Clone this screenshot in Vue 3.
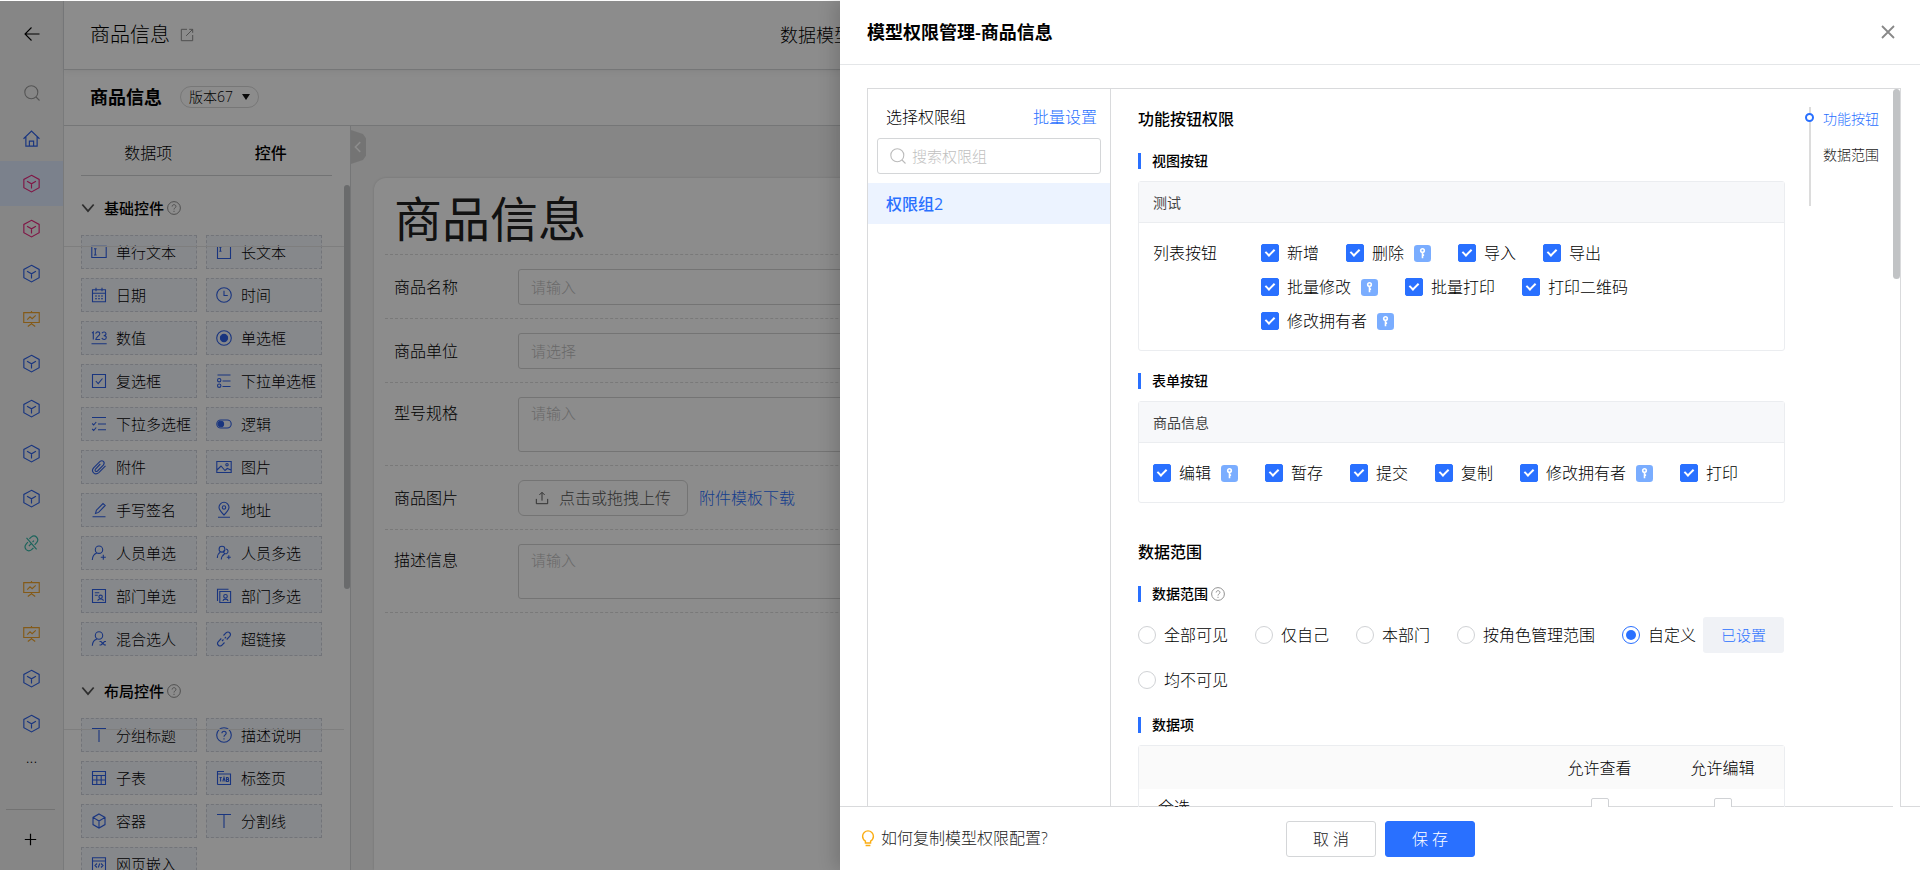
<script setup>
import { ref } from 'vue'

const icons = {
  back: '<path d="M15.500 8H1M7.500 1.500 1 8l6.500 6.500"/>',
  search: '<circle cx="7.300" cy="7.300" r="6.500"/><path d="M12 12l3.500 3.500"/>',
  home: '<path d="M.5 8.200 8 1l7.500 7.200M2.700 6.500v8.700h10.600V6.500M6 15v-4.500h4V15"/>',
  cube: '<path d="M8 .3 15.200 4.200v7.800L8 15.900.8 12V4.200zM3.800 5.900 8 8.300l4.200-2.400M8 8.300v4.500"/>',
  board: '<path d="M.7 2.500h14.600v9.300H.7zM8 1v1.500M8 12v1.500M4.500 15.500 8 13l3.500 2.500M4 9l2.600-2.500 2 1.700L12 5"/>',
  unlink: '<path d="M6 3.500 8 1.800c1.400-1.100 3.500-1 4.800.3 1.300 1.400 1.300 3.500.2 4.900l-2 2.200M4.600 6.600 2.800 8.900C1.700 10.300 1.800 12.400 3 13.700c1.400 1.300 3.400 1.400 4.800.3l2-1.800M3.300 2.800l9.500 10.700M5.500 10.500l2-2.200M9 6.800l1.200-1.400"/>',
  open: '<path d="M8 1.500H1.500v13h13V8M10.500 1.500h4v4M14.500 1.500 7 9"/>',
  help: '<circle cx="8" cy="8" r="7.300"/><path d="M5.900 6.300c0-2.800 4.300-2.800 4.300 0 0 1.600-2.200 1.500-2.200 3.400M8 11.200v1.300"/>',
  chevron: '<path d="M1.500 4 8 11.500 14.500 4"/>',
  input: '<path d="M.8 2.200h14.400v11.300H.8zM3 4.700h2.600M3 11h2.600M4.300 4.700V11"/>',
  longtext: '<path d="M1.500 2v12.500h13V2M3.300 3.300h2.200M3.300 7.300h2.200M4.400 3.300v4"/>',
  date: '<path d="M1.500 2.800h13v12h-13zM1.500 6.200h13M5 .8v3.500M11 .8v3.500M4 9h2M7 9h2M10 9h2M4 11.800h2M7 11.800h2M10 11.800h2"/>',
  time: '<circle cx="8" cy="8" r="7.300"/><path d="M8 3.800V8.500h3.800"/>',
  number: '<path d="M1 3.200 2.300 2v7.500M4.800 3.700c0-2.500 4-2.300 4 0 0 2-4 3.500-4 5.800h4.300M11 3.200c.8-1.800 4-1.500 4 .5 0 1.300-1 1.900-2.300 1.900 1.500 0 2.600.6 2.600 2 0 2.400-3.600 2.500-4.500.5M.5 13.700h15.200"/>',
  radio: '<circle cx="8" cy="8" r="7.300"/><circle cx="8" cy="8" r="3.600" fill="currentColor"/>',
  check: '<path d="M1.500 1.500h13v13h-13zM4.800 8l2.400 2.600L11.500 5.500"/>',
  selone: '<circle cx="3.200" cy="7.200" r="1.700"/><circle cx="3.200" cy="12.700" r="1.700"/><path d="M1.500 2h13M6.500 8h8M6.500 13.500h8"/>',
  selmany: '<path d="M1 1.500h14M7 8h8M7 13.800h8M1.200 7.500 2.700 9l2.500-3M1.200 13 2.700 14.500l2.500-3"/>',
  toggle: '<rect x=".8" y="4" width="14.400" height="8" rx="4"/><circle cx="4.800" cy="8" r="2.800" fill="currentColor"/>',
  clip: '<path d="M14.500 6.800l-6.700 6.800c-3.700 3.300-8.300-1-5.200-4.700l6.200-6.300c2.700-2.300 5.800.8 3.500 3.500L6.500 12c-1.600 1.300-3.300-.3-2-2l4.800-5"/>',
  image: '<path d="M.8 2.500h14.400v11H.8zM1 11l4-4 4 4.500 2.300-2 3.700 1.500"/><circle cx="11" cy="5.700" r="1.200"/>',
  sign: '<path d="M1.500 14.800h13M4.500 11.500l.9-3.300L12 1.500l2.200 2L7.600 10.400z"/>',
  place: '<path d="M8 13c-3.300-3.300-5-5.500-5-7.700a5 5 0 0 1 10 0C13 7.500 11.300 9.700 8 13zM2 15.300h12"/><circle cx="8" cy="5.500" r="1.700"/>',
  user: '<circle cx="8" cy="4.700" r="3.700"/><path d="M1.300 15c.2-4 2-6 4.500-6.900M12.300 9.800v5M9.800 12.300h5"/>',
  users: '<circle cx="6" cy="4.200" r="2.900"/><path d="M1.300 13c.2-3.500 1.500-5 3-5.900M10 4c2.300.3 2.800 3.200.8 4.500-2 .9-4-1-3-3M5.300 14.500c.2-2.800 1.500-4.500 3.200-5.500M12.800 10.300v4M10.800 12.300h4"/>',
  dept: '<path d="M1.500 1.500h13v13h-13zM3.800 4.800h4.500M3.800 7.300h3M6.800 12.800c.3-2.500 5.300-2.500 5.600 0"/><circle cx="9.600" cy="8.800" r="1.700"/>',
  depts: '<path d="M3.800 3.500h10.800v11H3.800zM1.500 13V1.300h11M7 13c.3-2.500 4.700-2.500 5 0"/><circle cx="9.500" cy="8.300" r="1.800"/>',
  mix: '<circle cx="8" cy="4.500" r="3.700"/><path d="M1.300 14.800c.2-4 2-6 4.500-6.700M8.500 10.500h1.500l3.500 3.500h1.500M8.500 14H10l3.500-3.500H15"/>',
  link: '<path d="M7.500 4.500l2.700-2.800c2.500-2 5.500 1 3.700 3.500l-3.200 3.300M8.500 11.500l-2.700 2.800c-2.500 2-5.500-1-3.700-3.500l3.200-3.300M6 10l1.500-1.500M8.700 7.300l1.300-1.300"/>',
  title: '<path d="M1 1.500h14M8 1.500v13.500"/>',
  table: '<path d="M1.500 1.500h13v13h-13zM1.500 5.500h13M1.500 10h13M5.800 5.500v9M10.200 5.500v9"/>',
  tab: '<path d="M1.500 14.500V1.500H8M1.500 4h13v10.500h-13M3.500 7.500h2.300M4.600 7.500v4M6.800 11.500l1.200-4 1.200 4M10.500 7.500v4h1.500c1 0 1-2 0-2h-1.500h1.300c1 0 .9-2 0-2z"/>',
  box: '<path d="M8 1 14 4.400v7.200L8 15l-6-3.400V4.400zM2 4.400 8 8l6-3.600M8 8v7"/>',
  web: '<path d="M1.500 1.800h13v12.700h-13zM1.500 5h13M6 7.500 4 9.500l2 2M10 7.500l2 2-2 2M8.700 7.500l-1.400 4"/>',
  upload: '<path d="M8 11V1.800M5 4.500l3-3 3 3M1.500 9v5.500h13V9"/>',
  left: '<path d="M11 1.500 4.500 8 11 14.500"/>',
  close: '<path d="M2 2l12 12M14 2 2 14"/>',
  plus: '<path d="M8 1v14M1 8h14"/>',
  bulb: '<path d="M5.400 13V11.200C3.700 10.100 2.600 8.300 2.600 6.300a5.400 5.400 0 0 1 10.800 0c0 2-1.100 3.800-2.800 4.900V13zM5.600 15.500h4.800"/>',
}

const nav = [
  ['home', 'blue', '首页'], ['cube', 'pink', '商品信息'], ['cube', 'pink', '模型'], ['cube', 'blue', '模型'],
  ['board', 'gold', '看板'], ['cube', 'blue', '模型'], ['cube', 'blue', '模型'], ['cube', 'blue', '模型'],
  ['cube', 'blue', '模型'], ['unlink', 'teal', '链接'], ['board', 'gold', '看板'], ['board', 'gold', '看板'],
  ['cube', 'blue', '模型'], ['cube', 'blue', '模型'],
]

const sections = [
  { name: '基础控件', items: [
    ['input', '单行文本'], ['longtext', '长文本'], ['date', '日期'], ['time', '时间'],
    ['number', '数值'], ['radio', '单选框'], ['check', '复选框'], ['selone', '下拉单选框'],
    ['selmany', '下拉多选框'], ['toggle', '逻辑'], ['clip', '附件'], ['image', '图片'],
    ['sign', '手写签名'], ['place', '地址'], ['user', '人员单选'], ['users', '人员多选'],
    ['dept', '部门单选'], ['depts', '部门多选'], ['mix', '混合选人'], ['link', '超链接'],
  ] },
  { name: '布局控件', items: [
    ['title', '分组标题'], ['help', '描述说明'], ['table', '子表'], ['tab', '标签页'],
    ['box', '容器'], ['title', '分割线'], ['web', '网页嵌入'],
  ] },
]

const listRows = ref([
  [{ t: '新增', on: true }, { t: '删除', on: true, key: true }, { t: '导入', on: true }, { t: '导出', on: true }],
  [{ t: '批量修改', on: true, key: true }, { t: '批量打印', on: true }, { t: '打印二维码', on: true }],
  [{ t: '修改拥有者', on: true, key: true }],
])
const formButtons = ref([
  { t: '编辑', on: true, key: true }, { t: '暂存', on: true }, { t: '提交', on: true },
  { t: '复制', on: true }, { t: '修改拥有者', on: true, key: true }, { t: '打印', on: true },
])
const scopes = ['全部可见', '仅自己', '本部门', '按角色管理范围', '自定义', '均不可见']
const scope = ref('自定义')
</script>

<template>
  <div class="app">
    <div class="workspace">
      <nav class="rail">
        <button class="rail-back" aria-label="返回"><svg class="ic" viewBox="0 0 16 16" v-html="icons.back" /></button>
        <button class="rail-search" aria-label="搜索"><svg class="ic" viewBox="0 0 16 16" v-html="icons.search" /></button>
        <a v-for="(n, i) in nav" :key="i" href="#" :class="['rail-item', n[1], { active: i === 1 }]" :aria-label="n[2]">
          <svg class="ic" viewBox="0 0 16 16" v-html="icons[n[0]]" />
        </a>
        <button class="rail-more">...</button>
        <div class="rail-foot"><button aria-label="新增"><svg class="ic plus" viewBox="0 0 16 16" v-html="icons.plus" /></button></div>
      </nav>

      <div class="main">
        <header class="topbar">
          <div class="topbar-name">商品信息<svg class="ic open" viewBox="0 0 16 16" v-html="icons.open" /></div>
          <a href="#" class="topbar-tab">数据模型</a>
        </header>
        <div class="subbar">
          <h1>商品信息</h1>
          <button class="version">版本67<i class="caret"></i></button>
        </div>

        <div class="designer">
          <aside class="palette">
            <div class="tabs">
              <button>数据项</button>
              <button class="current">控件</button>
            </div>
            <section v-for="s in sections" :key="s.name" class="group">
              <h2><svg class="ic chev" viewBox="0 0 16 16" v-html="icons.chevron" />{{ s.name }}<svg class="ic help" viewBox="0 0 16 16" v-html="icons.help" /></h2>
              <div class="group-grid">
                <button v-for="it in s.items" :key="it[1]" class="tool">
                  <svg class="ic" viewBox="0 0 16 16" v-html="icons[it[0]]" />{{ it[1] }}
                </button>
              </div>
            </section>
            <div class="thumb palette-thumb"></div>
          </aside>

          <div class="canvas">
            <button class="fold" aria-label="收起"><svg class="ic" viewBox="0 0 16 16" v-html="icons.left" /></button>
            <div class="sheet">
              <div class="sheet-title">商品信息</div>
              <div class="field"><label for="f1">商品名称</label><input id="f1" placeholder="请输入"></div>
              <div class="field"><label for="f2">商品单位</label><select id="f2"><option>请选择</option></select></div>
              <div class="field"><label for="f3">型号规格</label><textarea id="f3" placeholder="请输入"></textarea></div>
              <div class="field">
                <span class="label">商品图片</span>
                <button class="upload"><svg class="ic" viewBox="0 0 16 16" v-html="icons.upload" />点击或拖拽上传</button>
                <a href="#" class="template">附件模板下载</a>
              </div>
              <div class="field"><label for="f5">描述信息</label><textarea id="f5" placeholder="请输入"></textarea></div>
            </div>
          </div>
        </div>
      </div>
    </div>

    <div class="mask"></div>

    <div class="drawer" role="dialog" aria-label="模型权限管理">
      <header class="drawer-head">
        <h2>模型权限管理-商品信息</h2>
        <button aria-label="关闭"><svg class="ic" viewBox="0 0 16 16" v-html="icons.close" /></button>
      </header>

      <div class="drawer-body">
        <div class="frame">
          <aside class="groups">
            <div class="groups-head"><span>选择权限组</span><a href="#">批量设置</a></div>
            <div class="search">
              <svg class="ic" viewBox="0 0 16 16" v-html="icons.search" />
              <input aria-label="搜索权限组" placeholder="搜索权限组">
            </div>
            <button class="group-item">权限组2</button>
          </aside>

          <div class="detail">
            <div class="content">
              <h3>功能按钮权限</h3>
              <h4>视图按钮</h4>
              <div class="card">
                <div class="card-head">测试</div>
                <div class="card-body">
                  <div class="card-label">列表按钮</div>
                  <div>
                    <div v-for="(row, r) in listRows" :key="r" class="options">
                      <span v-for="o in row" :key="o.t" class="option">
                        <label><input v-model="o.on" type="checkbox">{{ o.t }}</label>
                        <svg v-if="o.key" class="key" viewBox="0 0 16 16"><rect width="16" height="16" rx="3" /><circle cx="8" cy="5.200" r="1.700" /><path d="M8 7v5.500M8 9.500h1.500" /></svg>
                      </span>
                    </div>
                  </div>
                </div>
              </div>

              <h4>表单按钮</h4>
              <div class="card">
                <div class="card-head">商品信息</div>
                <div class="card-body">
                  <div class="options">
                    <span v-for="o in formButtons" :key="o.t" class="option">
                      <label><input v-model="o.on" type="checkbox">{{ o.t }}</label>
                      <svg v-if="o.key" class="key" viewBox="0 0 16 16"><rect width="16" height="16" rx="3" /><circle cx="8" cy="5.200" r="1.700" /><path d="M8 7v5.500M8 9.500h1.500" /></svg>
                    </span>
                  </div>
                </div>
              </div>

              <h3 class="next">数据范围</h3>
              <h4>数据范围<svg class="ic help" viewBox="0 0 16 16" v-html="icons.help" /></h4>
              <div class="scopes">
                <span v-for="s in scopes" :key="s" class="option scope">
                  <label><input v-model="scope" type="radio" name="scope" :value="s">{{ s }}</label>
                  <button v-if="s === '自定义'" class="setted">已设置</button>
                </span>
              </div>

              <h4 class="tight">数据项</h4>
              <table>
                <thead><tr><th></th><th>允许查看</th><th>允许编辑</th></tr></thead>
                <tbody>
                  <tr>
                    <td>全选</td>
                    <td><input type="checkbox" aria-label="全选允许查看"></td>
                    <td><input type="checkbox" aria-label="全选允许编辑"></td>
                  </tr>
                </tbody>
              </table>
            </div>

            <nav class="anchor">
              <a href="#" class="on">功能按钮</a>
              <a href="#">数据范围</a>
            </nav>
            <div class="track"><div class="thumb"></div></div>
          </div>
        </div>
      </div>

      <footer class="drawer-foot">
        <a href="#" class="tip"><svg class="ic" viewBox="0 0 16 16" v-html="icons.bulb" />如何复制模型权限配置?</a>
        <div class="actions">
          <button class="btn">取 消</button>
          <button class="btn primary">保 存</button>
        </div>
      </footer>
    </div>
  </div>
</template>

<style>
body { overflow: hidden; }
</style>

<style scoped>
* { box-sizing: border-box; }
.app {
  position: relative; height: 100vh; padding-top: 1px; overflow: hidden; background: #fff;
  font-family: "Open Sans", "Noto Sans CJK SC", sans-serif; font-size: 16px; line-height: 24px; font-weight: 300; color: #000;
}
h1, h2, h3, h4 { margin: 0; font-weight: 500; }
button, input, select, textarea { font: inherit; color: inherit; margin: 0; }
button { border: 0; padding: 0; background: none; cursor: pointer; }
a { text-decoration: none; color: #2970ff; }
.ic { width: 16px; height: 16px; flex: none; fill: none; stroke: currentColor; stroke-width: 1.1; overflow: visible; }

.workspace { display: flex; height: 100%; }
.rail { width: 64px; flex: none; display: flex; flex-direction: column; align-items: center; background: #f5f5f5; border-right: 1px solid #dcdee0; }
.rail button { display: flex; align-items: center; justify-content: center; width: 100%; flex: none; }
.rail-back { height: 66px; }
.rail-search { height: 49px; padding-top: 3px; color: #999; }
.rail-item { height: 45px; flex: none; width: 100%; display: flex; align-items: center; justify-content: center; }
.rail-item .ic { width: 17px; height: 17px; }
.rail-item.active { background: #e1ebff; }
.blue { color: #2f62e8; }
.pink { color: #e8287f; }
.gold { color: #f0a42c; }
.teal { color: #32b5a5; }
.rail-more { height: 22px; }
.rail-foot { align-self: flex-start; width: 49px; margin: 41px 0 0 6px; padding-top: 23px; border-top: 1px solid #cfcfcf; }
.plus { width: 13px; height: 13px; stroke-width: 1.500; }

.main { flex: 1; min-width: 0; display: flex; flex-direction: column; }
.topbar { position: relative; height: 69px; flex: none; display: flex; align-items: center; padding-left: 26px; border-bottom: 1px solid #d5d7d9; box-shadow: 0 2px 6px rgba(0, 0, 0, .06); }
.topbar-name { flex: 0 0 690px; display: flex; align-items: center; font-size: 20px; }
.open { width: 14px; height: 14px; margin-left: 10px; color: #8c8c8c; }
.topbar-tab { font-size: 18px; color: inherit; }
.subbar { height: 56px; flex: none; display: flex; align-items: center; padding: 0 0 2px 26px; border-bottom: 1px solid #d5d7d9; }
.subbar h1 { font-size: 18px; font-weight: 600; }
.version { display: flex; align-items: center; gap: 9px; height: 22px; margin-left: 18px; padding: 0 8px; border: 1px solid #d9d9d9; border-radius: 11px; font-size: 14px; }
.caret { border: 4px solid transparent; border-top: 6px solid #111; border-bottom: 0; }

.designer { flex: 1; min-height: 0; display: flex; }
.palette { position: relative; width: 287px; flex: none; overflow: hidden; border-right: 1px solid #d5d7d9; }
.tabs { display: flex; height: 50px; margin: 0 18px 0 17px; padding: 4px 0 0 6px; border-bottom: 1px solid #d0d2d4; }
.tabs button { flex: 1; }
.tabs .current { font-weight: 500; }
.group { position: relative; padding: 20px 0 0 17px; }
.group::after { content: ""; position: absolute; left: 0; right: 6px; top: 70px; border-top: 1px solid #e6e6e6; }
.group h2 { display: flex; align-items: center; height: 24px; font-size: 15px; }
.chev { width: 14px; height: 14px; margin-right: 9px; stroke-width: 2; color: #555; }
.help { width: 14px; height: 14px; margin-left: 3px; color: #8c8c8c; }
.group-grid { display: grid; grid-template-columns: 116px 116px; gap: 9px; margin-top: 15px; padding-bottom: 3px; }
.tool { display: flex; align-items: center; height: 34px; padding-left: 9px; gap: 9px; border: 1px dashed #d0d3dc; background: #f5f7fd; font-size: 15px; white-space: nowrap; }
.tool .ic { color: #2f62e8; }
.thumb { background: #c1c3c5; border-radius: 4px; }
.palette-thumb { position: absolute; right: 0; top: 59px; width: 6px; height: 404px; }

.canvas { position: relative; flex: 1; min-width: 0; padding: 52px 0 0 23px; background: #f5f5f5; }
.fold { position: absolute; left: 0; top: 4px; width: 15px; height: 34px; background: #d4d4d4; clip-path: polygon(0 0, 80% 12%, 100% 24%, 100% 76%, 80% 88%, 0 100%); color: #fff; display: flex; align-items: center; }
.fold .ic { width: 14px; height: 12px; stroke-width: 2; }
.sheet { height: 100%; padding: 1px 11px; background: #fff; border-radius: 12px 0 0 0; box-shadow: 0 0 3px rgba(0, 0, 0, .15); }
.sheet-title { height: 76px; padding: 0 9px; font-size: 48px; line-height: 80px; font-weight: 400; border-bottom: 1px dashed #dcdcdc; color: #222; }
.field { display: flex; align-items: flex-start; padding: 14px 9px 13px; border-bottom: 1px dashed #dcdcdc; }
.field label, .label { width: 124px; flex: none; padding-top: 6px; }
.field input, .field select, .field textarea { flex: 1; height: 36px; padding: 0 12px; border: 1px solid #d4d4d4; border-radius: 3px; background: #fff; font-size: 15px; appearance: none; outline: 0; color: #bfbfbf; }
.field textarea { height: 55px; padding-top: 3px; resize: none; }
.field label:has(+ textarea) { padding-top: 4px; }
::placeholder { color: #bfbfbf; opacity: 1; }
.upload { display: flex; align-items: center; gap: 10px; height: 36px; padding: 0 16px; border: 1px solid #d4d4d4; border-radius: 6px; color: #555; }
.upload .ic { width: 14px; height: 14px; }
.template { margin-left: 11px; padding-top: 6px; }

.mask { position: absolute; inset: 1px 0 0 0; background: rgba(0, 0, 0, .45); }

.drawer { position: absolute; top: 0; right: 0; bottom: 0; width: 56.25%; display: flex; flex-direction: column; background: #fff; box-shadow: -6px 0 16px rgba(0, 0, 0, .15); }
.drawer-head { height: 65px; flex: none; display: flex; align-items: center; justify-content: space-between; padding: 0 24px 0 27px; border-bottom: 1px solid #e4e6e8; }
.drawer-head h2 { font-size: 18px; font-weight: 600; }
.drawer-head button { display: flex; color: #888; }
.drawer-head .ic { stroke-width: 1.800; }
.drawer-body { position: relative; z-index: 1; flex: 1; min-height: 0; padding: 23px 19px 0 27px; }
.frame { display: flex; height: 100%; border: 1px solid #d9dadc; border-bottom: 0; }
.groups { width: 243px; flex: none; border-right: 1px solid #d9dadc; }
.groups-head { display: flex; justify-content: space-between; padding: 16px 13px 9px 18px; }
.search { display: flex; align-items: center; gap: 6px; height: 36px; margin: 0 9px; padding: 0 12px; border: 1px solid #d4d6d8; border-radius: 3px; }
.search .ic { color: #bbb; }
.search input { flex: 1; min-width: 0; border: 0; outline: 0; padding: 0; font-size: 15px; }
.group-item { display: block; width: 100%; height: 41px; margin-top: 9px; padding-left: 18px; text-align: left; background: #ecf3ff; color: #2970ff; font-weight: 500; }
.detail { position: relative; flex: 1; min-width: 0; display: flex; padding-left: 27px; overflow: hidden; }
.content { flex: 1; min-width: 0; padding-top: 18px; }
h3 { font-size: 16px; }
h3.next { margin-top: 37px; }
h4 { display: flex; align-items: center; height: 16px; margin: 22px 0 12px; padding-left: 11px; border-left: 3px solid #2970ff; font-size: 14px; }
h4.tight { margin-top: 15px; }
.card { border: 1px solid #ebedf0; border-radius: 3px; }
.card-head { height: 41px; padding: 0 14px; line-height: 41px; background: #f7f8fa; border-bottom: 1px solid #ebedf0; font-size: 14px; font-weight: 400; color: #444; }
.card-body { display: flex; padding: 13px 14px 12px; }
.card-label { width: 108px; line-height: 34px; }
.options, .scopes { display: flex; flex-wrap: wrap; column-gap: 27px; }
.option { display: flex; align-items: center; gap: 10px; height: 34px; white-space: nowrap; }
.option label { display: flex; align-items: center; gap: 8px; }
.scopes { margin-top: -2px; }
.scope { height: 45px; gap: 7px; }
.key { width: 17px; height: 17px; }
.key rect { fill: #7aadff; }
.key circle, .key path { fill: none; stroke: #fff; stroke-width: 1.500; }
input[type=checkbox], input[type=radio] { appearance: none; display: block; position: relative; width: 18px; height: 18px; flex: none; border: 1px solid #d0d2d5; border-radius: 2px; background: #fff; }
input[type=checkbox]:checked { background: #2970ff; border-color: #2970ff; }
input[type=checkbox]:checked::after { content: ""; position: absolute; left: 5px; top: 2px; width: 4px; height: 7px; border: solid #fff; border-width: 0 2px 2px 0; transform: rotate(45deg); }
input[type=radio] { border-radius: 50%; }
input[type=radio]:checked { border-color: #2970ff; }
input[type=radio]:checked::after { content: ""; position: absolute; inset: 3px; border-radius: 50%; background: #2970ff; }
.setted { height: 36px; padding: 0 18px; border-radius: 3px; background: #f0f2f6; color: #2970ff; font-size: 15px; }
table { width: 100%; table-layout: fixed; border-collapse: separate; border-spacing: 0; border: 1px solid #ebedf0; border-radius: 3px; }
th { height: 43px; padding: 0; font-weight: 300; background: #fafafa; }
th:nth-child(n+2) { width: 123px; }
td { height: 36px; padding: 0; text-align: center; }
td:first-child { text-align: left; padding-left: 19px; }
td input { margin: 0 auto; }
.anchor { position: relative; width: 91px; flex: none; height: 99px; margin: 18px 0 0 24px; border-left: 2px solid #dcdcdc; }
.anchor a { position: relative; display: block; height: 36px; padding-left: 12px; font-size: 14px; color: #222; }
.anchor .on { color: #2970ff; }
.anchor .on::before { content: ""; position: absolute; left: -6px; top: 6px; width: 5px; height: 5px; border: 2px solid #2970ff; border-radius: 50%; background: #fff; }
.track { position: absolute; right: 0; top: 0; bottom: 0; width: 7px; background: #fff; }
.track .thumb { height: 190px; }

.drawer-foot { position: relative; height: 64px; margin-top: -1px; flex: none; display: grid; grid-template-columns: 446px 1fr; align-items: center; border-top: 1px solid #d9dadc; }
.tip { display: flex; align-items: center; gap: 5px; padding: 0 0 2px 20px; color: #222; }
.tip .ic { color: #faad14; stroke-width: 1.400; }
.actions { display: flex; gap: 9px; }
.btn { width: 90px; height: 36px; border: 1px solid #d4d6d8; border-radius: 3px; background: #fff; color: #222; }
.primary { background: #2970ff; border-color: #2970ff; color: #fff; }
</style>
